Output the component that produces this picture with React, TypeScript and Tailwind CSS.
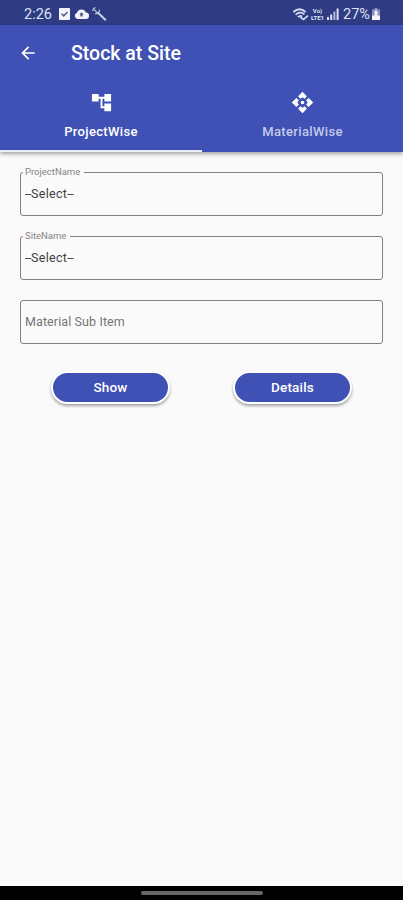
import React from "react";
import { MdAccountTree, MdArrowBack } from "react-icons/md";

function StatusBar() {
  return (
    <div className="flex h-[25px] shrink-0 items-center bg-[#2f3c84] pt-[3px] pl-[24px] text-[14.5px] leading-none text-[#dfe2f3]">
      <span className="w-[28px] pt-[2px] whitespace-nowrap">2:26</span>
      <svg className="ml-[7px] h-[12px] w-[11px]" viewBox="0 0 11 12">
        <rect width="11" height="12" rx="1" fill="#f4f5fc" />
        <path d="M2.7 5.8l2 2.2 3.8-4" fill="none" stroke="#4d5789" strokeWidth="1.5" />
      </svg>
      <svg className="ml-[4px] h-[12px] w-[15px]" viewBox="0 0 15 12">
        <path d="M3.5 11A3.2 3.2 0 0 1 3 4.8 4.6 4.6 0 0 1 11.8 4.6 3.2 3.2 0 0 1 11.8 11z" fill="#f4f5fc" />
        <path d="M7.5 4.2L9.8 6.6H8.6v2H6.4v-2H5.2z" fill="#4d5789" />
      </svg>
      <svg className="ml-[3px] h-[14px] w-[15px]" viewBox="0 0 15 14" fill="none" stroke="#cbd0ea">
        <path d="M5.5 5.2l8.3 8" strokeWidth="2" />
        <path d="M3.6 .8A3 3 0 0 0 .8 4M2.2 2.6l3 3M7.4 2.6A3.4 3.4 0 0 1 6.4 5.6 3 3 0 0 1 3 6.4" strokeWidth="1.1" />
      </svg>
      <div className="grow" />
      <svg className="mr-[1px] h-[13px] w-[16px]" viewBox="0 0 16 13" fill="none" stroke="#d5d9ef">
        <path d="M.3 4Q6.5 -1.6 12.6 4M2.6 6.6Q7 2.8 11.4 6.3M5 9.2Q7 7 9 8.6" strokeWidth="1.9" />
        <path d="M7.5 9.2l3 2.2 4.5-3.8" strokeWidth="1.7" />
      </svg>
      <div className="flex w-[15px] flex-col items-center text-[6px] leading-[7px] font-bold">
        <span className="h-[6px] leading-[6px]">Vo)</span>
        <span className="h-[7px] whitespace-nowrap">LTE1</span>
      </div>
      <svg className="ml-[2px] h-[12px] w-[12px]" viewBox="0 0 12 12" fill="#dfe2f3">
        <rect y="9" width="2" height="3" />
        <rect x="3.2" y="6.5" width="2" height="5.5" />
        <rect x="6.4" y="3.5" width="2" height="8.5" opacity=".75" />
        <rect x="9.6" y="0.5" width="2" height="11.5" />
      </svg>
      <span className="ml-[4px] w-[29px] pt-[2px] whitespace-nowrap">27%</span>
      <svg className="mr-[23px] h-[12px] w-[8px]" viewBox="0 0 8 12">
        <path d="M2.6 0h2.8v1.3H7a1 1 0 0 1 1 1V11a1 1 0 0 1-1 1H1a1 1 0 0 1-1-1V2.3a1 1 0 0 1 1-1h1.6z" fill="#8b93c0" />
        <path d="M4 1.8l2.2 3.4H5.3v2.4H8V12H0V7.6h2.7V5.2h-.9z" fill="#f4f5fc" />
      </svg>
    </div>
  );
}

function ApiIcon() {
  return (
    <svg className="h-[23px] w-[23px]" viewBox="0 0 24 24" fill="white">
      <path d="M12 .8l4.6 4.8-2.3 2.6L12 6.6 9.7 8.2 7.4 5.6z" />
      <path d="M12 23.2l4.6-4.8-2.3-2.6-2.3 1.6-2.3-1.6-2.3 2.6z" />
      <path d="M.8 12l4.8-4.6 2.6 2.3L6.6 12l1.6 2.3-2.6 2.3z" />
      <path d="M23.2 12l-4.8-4.6-2.6 2.3 1.6 2.3-1.6 2.3 2.6 2.3z" />
      <circle cx="12" cy="12" r="1.9" />
    </svg>
  );
}

function SelectField({ label }: { label: string }) {
  return (
    <fieldset className="h-[49px] rounded-[3px] border border-[#808080] pl-[2px]">
      <legend className="h-[10px] pr-[4px] pl-[2px] text-[9.5px] leading-[10px] text-[#868686]">{label}</legend>
      <div className="pt-[9px] pl-[2px] text-[12.5px] leading-[16px] text-[#3f3f3f]">
        <span className="tracking-[-0.4px]">--</span>
        <span className="tracking-[0.3px]">Select</span>
        <span className="tracking-[-0.4px]">--</span>
      </div>
    </fieldset>
  );
}

function ActionButton({ text }: { text: string }) {
  return (
    <button className="h-[33px] w-[119px] rounded-full border-2 border-white bg-[#3f51b5] text-[13.5px] leading-none font-medium tracking-[0.2px] text-white shadow-[0_2px_3px_rgba(0,0,0,0.35)]">
      {text}
    </button>
  );
}

export default function App() {
  return (
    <div className="flex h-[900px] w-[403px] flex-col overflow-hidden bg-[#fafafa] font-['Roboto',sans-serif]">
      <StatusBar />
      <header className="h-[127px] shrink-0 bg-[#3f51b5] text-white shadow-[0_2px_4px_rgba(0,0,0,0.35)]">
        <div className="flex h-[55px] items-center pl-[18px]">
          <MdArrowBack size={20} />
          <h1 className="ml-[33px] pt-[2px] text-[19.5px] leading-none font-medium">Stock at Site</h1>
        </div>
        <div className="flex h-[72px]">
          <div className="flex w-[202px] flex-col items-center border-b-2 border-[#eceef9] pt-[11px]">
            <MdAccountTree size={23} />
            <span className="mt-[11px] text-[13px] leading-[14px] font-medium tracking-[0.35px]">ProjectWise</span>
          </div>
          <div className="flex w-[201px] flex-col items-center pt-[11px]">
            <ApiIcon />
            <span className="mt-[11px] text-[13px] leading-[14px] font-medium tracking-[0.35px] text-[#c3caea]">MaterialWise</span>
          </div>
        </div>
      </header>
      <main className="flex grow flex-col pr-[20px] pl-[20px] pt-[15px]">
        <SelectField label="ProjectName" />
        <div className="h-[15px]" />
        <SelectField label="SiteName" />
        <div className="mt-[20px] flex h-[44px] items-center rounded-[3px] border border-[#808080] pl-[4px] text-[12.5px] tracking-[0.1px] text-[#757575]">
          Material Sub Item
        </div>
        <div className="mt-[27px] flex gap-[63px] pl-[31px]">
          <ActionButton text="Show" />
          <ActionButton text="Details" />
        </div>
      </main>
      <div className="flex h-[14px] shrink-0 items-center justify-center bg-black">
        <div className="h-[4px] w-[122px] rounded-full bg-[#686868]" />
      </div>
    </div>
  );
}
